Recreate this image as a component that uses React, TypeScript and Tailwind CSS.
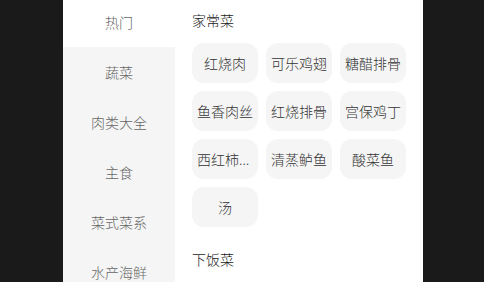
import React from 'react';

const categories = ['热门', '蔬菜', '肉类大全', '主食', '菜式菜系', '水产海鲜', '甜点饮品'];

const sections = [
  {
    title: '家常菜',
    dishes: ['红烧肉', '可乐鸡翅', '糖醋排骨', '鱼香肉丝', '红烧排骨', '宫保鸡丁', '西红柿炒鸡蛋', '清蒸鲈鱼', '酸菜鱼', '汤'],
  },
  {
    title: '下饭菜',
    dishes: ['麻婆豆腐', '回锅肉', '小炒肉'],
  },
];

const App = () => {
  const active = 0;

  return (
    <div
      className="h-screen overflow-hidden bg-[#1a1a1a] flex justify-center pl-[2px]"
      style={{ fontFamily: '"Noto Sans", "Noto Sans CJK SC", sans-serif' }}
    >
      <div className="w-[360px] h-full bg-white flex overflow-hidden">
        {/* Sidebar */}
        <div className="w-[112px] shrink-0 bg-[#f5f5f5] flex flex-col -mt-[3px]">
          {categories.map((name, i) => (
            <div
              key={name}
              className={`h-[50px] shrink-0 flex items-center justify-center text-[14px] font-light text-[#666] ${
                i === active ? 'bg-white' : ''
              }`}
            >
              {name}
            </div>
          ))}
        </div>

        {/* Content */}
        <div className="flex-1 px-[17px] pt-[11px]">
          {sections.map((section, si) => (
            <div key={section.title} className={si > 0 ? 'mt-[23px]' : ''}>
              <h2 className="text-[14px] leading-[20px] font-light text-[#222] mb-3">{section.title}</h2>
              <div className="grid grid-cols-3 gap-2">
                {section.dishes.map((dish) => (
                  <div
                    key={dish}
                    className="h-10 rounded-xl bg-[#f5f5f5] flex items-center justify-center px-[5px]"
                  >
                    <span className="text-[14px] font-light text-[#333] truncate">{dish}</span>
                  </div>
                ))}
              </div>
            </div>
          ))}
        </div>
      </div>
    </div>
  );
};

export default App;
